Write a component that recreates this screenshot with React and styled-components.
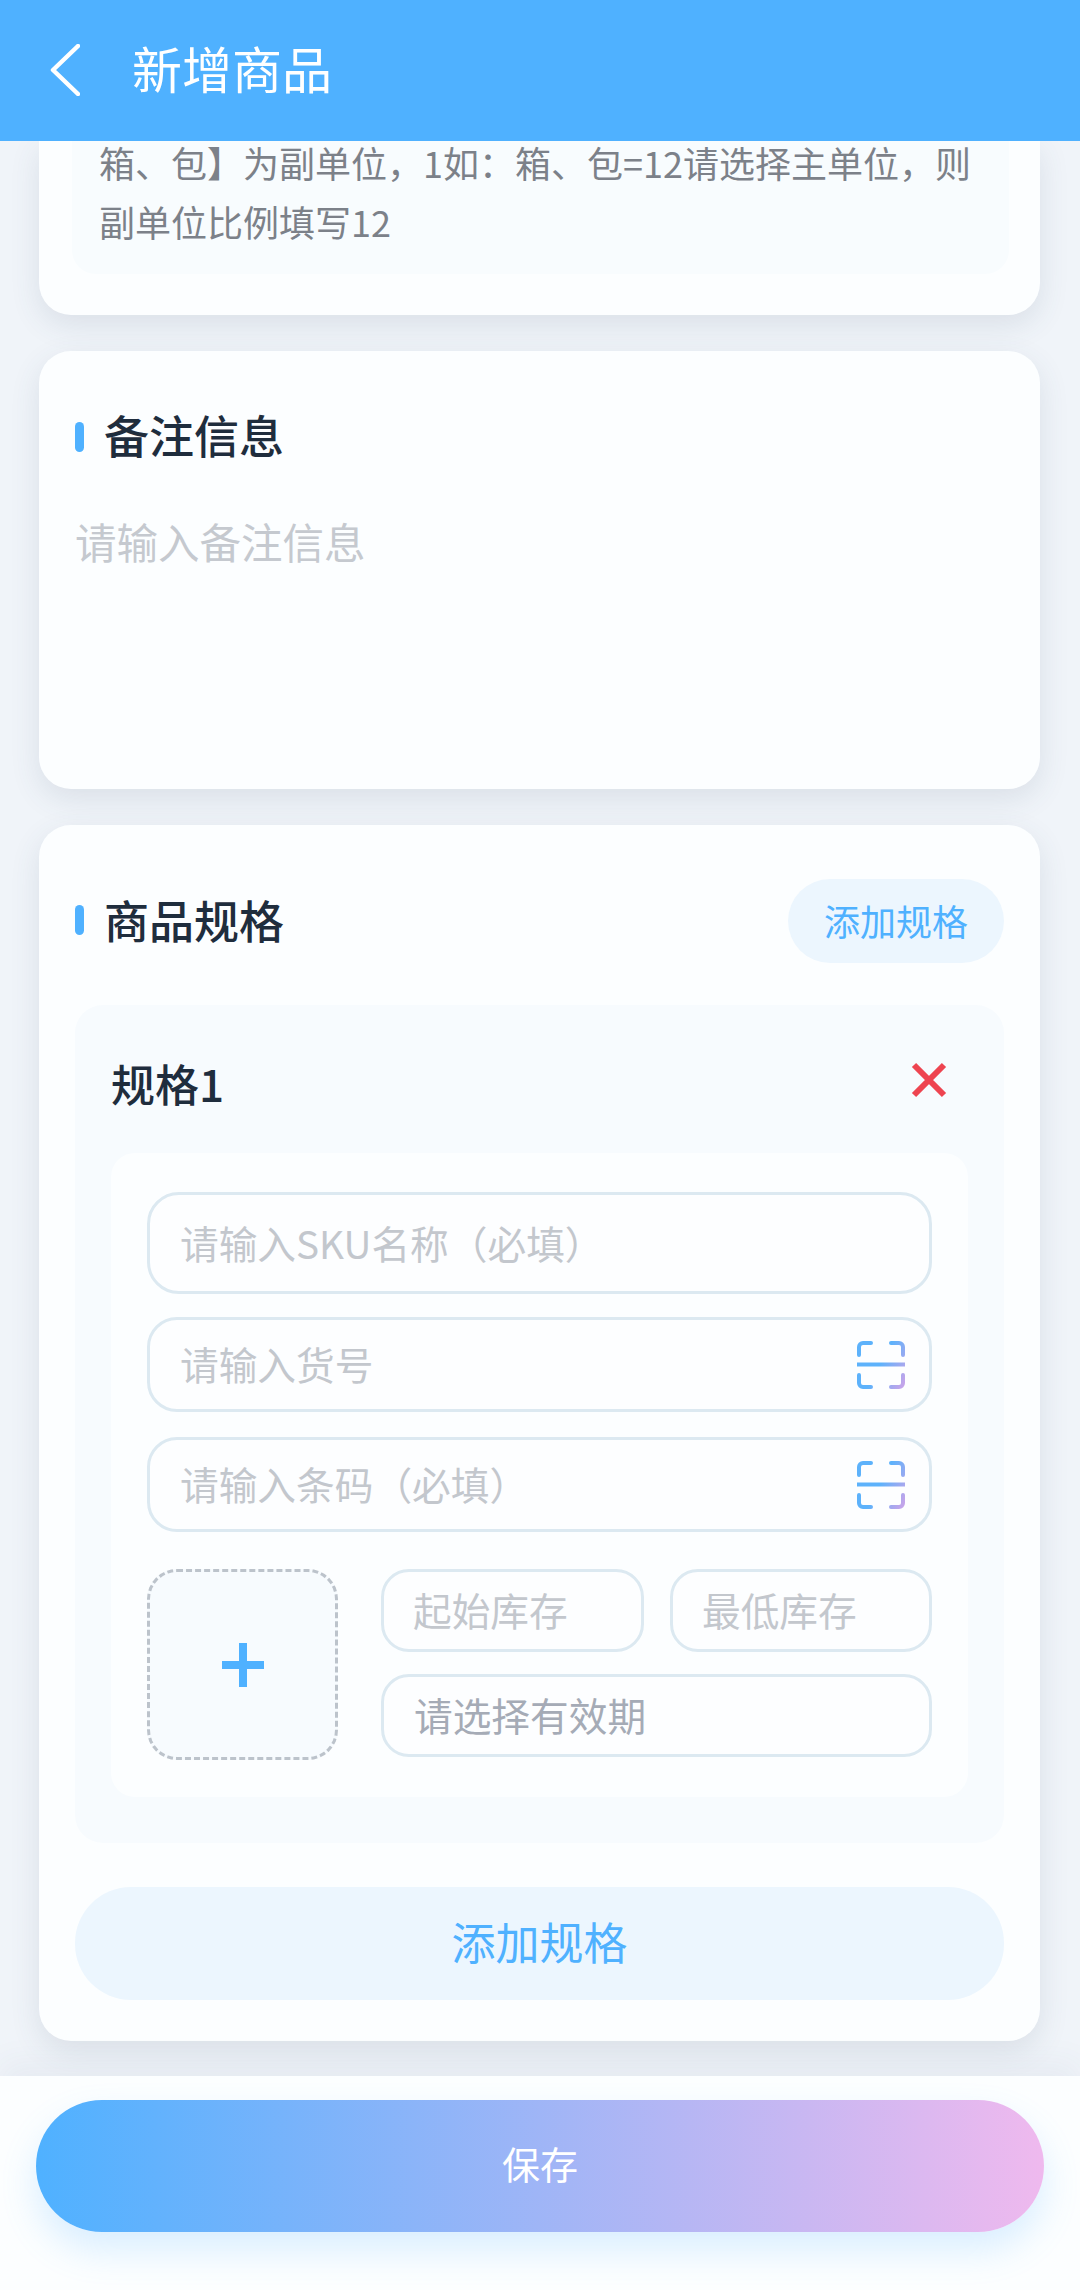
import React from 'react'
import styled, { createGlobalStyle } from 'styled-components'

const Global = createGlobalStyle`
  html, body {
    margin: 0;
    padding: 0;
    background: #f0f4f9;
  }
  * {
    box-sizing: border-box;
  }
`

const Page = styled.div`
  width: 1080px;
  height: 2290px;
  display: flex;
  flex-direction: column;
  overflow: hidden;
  background: #f0f4f9;
  font-family: "Noto Sans CJK SC", "Noto Sans", sans-serif;
`

const Header = styled.div`
  height: 141px;
  flex: none;
  display: flex;
  align-items: center;
  gap: 52px;
  padding: 0 0 0 50px;
  background: #4fb1ff;
  color: #fff;
  font-size: 50px;
  position: relative;
  z-index: 2;

  span {
    margin-top: -7px;
  }

  svg {
    margin-top: -2px;
  }
`

const Main = styled.div`
  flex: 1;
  overflow: hidden;
  display: flex;
  flex-direction: column;
  gap: 36px;
  padding: 0 40px 0 39px;
`

const Card = styled.div`
  flex: none;
  background: #fcfeff;
  border-radius: ${({ $clipped }) => ($clipped ? '0 0 32px 32px' : '32px')};
  padding: ${({ $clipped }) => ($clipped ? '0 31px 41px 33px' : '0 36px')};
  height: ${({ $height }) => $height}px;
  box-shadow: 0 10px 30px rgba(60, 80, 110, 0.12);
`

const Note = styled.div`
  margin-top: -8px;
  padding: 0 27px 0 27px;
  height: 141px;
  border-radius: 0 0 24px 24px;
  background: #f8fcfe;
  color: #7c8189;
  font-size: 36px;
  line-height: 59px;
`

const SectionHead = styled.div`
  height: ${({ $height }) => $height}px;
  margin-top: ${({ $top }) => $top || 0}px;
  display: flex;
  align-items: center;
  justify-content: space-between;
`

const SectionTitle = styled.div`
  display: flex;
  align-items: center;
  gap: 20px;
  color: #1f2d3d;
  font-size: 45px;
  font-weight: 500;
  line-height: 60px;
  margin-top: ${({ $lift }) => ($lift ? '-3px' : '0')};

  &::before {
    content: '';
    width: 9px;
    height: 30px;
    border-radius: 5px;
    background: #4fb1ff;
    margin-top: ${({ $lift }) => ($lift ? '0' : '3px')};
  }
`

const Remark = styled.div`
  margin-top: -8px;
  color: #c5c9cf;
  font-size: 41.5px;
  line-height: 60px;
`

const Chip = styled.div`
  width: 216px;
  height: 84px;
  padding-bottom: 2px;
  border-radius: 42px;
  display: flex;
  align-items: center;
  justify-content: center;
  background: #ecf6fe;
  color: #4fb1ff;
  font-size: 36px;
`

const SpecBlock = styled.div`
  margin-top: 42px;
  height: 838px;
  padding: 0 36px 46px;
  border-radius: 28px;
  background: #f7fbfe;
`

const SpecHead = styled.div`
  height: 148px;
  padding: 0 20px 0 0;
  display: flex;
  align-items: center;
  justify-content: space-between;
  color: #1f2d3d;
  font-size: 44px;
  font-weight: 500;

  span {
    margin-top: 8px;
  }

  svg {
    margin-top: 1px;
    margin-right: 1px;
  }
`

const FormPanel = styled.div`
  height: 644px;
  padding: 39px 36px 37px;
  border-radius: 24px;
  background: #fcfeff;
  display: flex;
  flex-direction: column;
`

const Field = styled.div`
  height: ${({ $height }) => $height || 95}px;
  margin-bottom: ${({ $gap }) => $gap || 0}px;
  padding: 0 25px 3px ${({ $inset }) => $inset || 30}px;
  display: flex;
  align-items: center;
  justify-content: space-between;
  border: 3px solid #dce9f1;
  border-radius: ${({ $radius }) => $radius || 30}px;
  background: #fdfeff;
  color: ${({ $strong }) => ($strong ? '#a5abb6' : '#c3c7cd')};
  font-size: 38.7px;

  svg {
    margin-bottom: -3px;
    margin-right: -1px;
  }
`

const BottomRow = styled.div`
  margin-top: 37px;
  display: flex;
  gap: 43px;
`

const Upload = styled.div`
  width: 191px;
  height: 191px;
  flex: none;
  display: flex;
  align-items: center;
  justify-content: center;
  border: 3px dashed #bcc3cb;
  border-radius: 30px;
  background: #f7fbfe;
`

const StockGrid = styled.div`
  flex: 1;
  height: 188px;
  display: grid;
  grid-template-columns: 263px 262px;
  grid-template-rows: 83px 83px;
  column-gap: 26px;
  row-gap: 22px;
`

const WideField = styled(Field)`
  grid-column: 1 / 3;
`

const AddButton = styled.div`
  margin-top: 44px;
  height: 113px;
  padding-bottom: 5px;
  border-radius: 56px;
  display: flex;
  align-items: center;
  justify-content: center;
  background: #ecf6fe;
  color: #4fb1ff;
  font-size: 44px;
`

const Footer = styled.div`
  height: 214px;
  flex: none;
  padding: 24px 36px 0;
  background: #fcfeff;
  box-shadow: 0 -14px 30px rgba(60, 80, 110, 0.05);
  position: relative;
  z-index: 1;
`

const SaveButton = styled.div`
  height: 132px;
  padding-bottom: 7px;
  border-radius: 66px;
  display: flex;
  align-items: center;
  justify-content: center;
  background: linear-gradient(90deg, #4fb1ff 0%, #efb9ee 100%);
  box-shadow: 0 18px 36px rgba(79, 177, 255, 0.2);
  color: #fff;
  font-size: 38px;
`

const BackIcon = () => (
  <svg width="30" height="52" viewBox="0 0 30 52" fill="none">
    <path d="M28 2 L3 26 L28 50" stroke="#fff" strokeWidth="4.5" strokeLinecap="round" strokeLinejoin="round" />
  </svg>
)

const CloseIcon = () => (
  <svg width="36" height="36" viewBox="0 0 36 36" fill="none">
    <path d="M3 3 L33 33 M33 3 L3 33" stroke="#ee4450" strokeWidth="6" strokeLinecap="butt" />
  </svg>
)

const ScanIcon = ({ id }) => (
  <svg width="48" height="48" viewBox="0 0 48 48" fill="none">
    <defs>
      <linearGradient id={id} x1="0" y1="14" x2="48" y2="40" gradientUnits="userSpaceOnUse">
        <stop offset="0.45" stopColor="#5db2fb" />
        <stop offset="1" stopColor="#c3a4ea" />
      </linearGradient>
    </defs>
    <path
      d="M2 14 V6 a4 4 0 0 1 4-4 H14 M34 2 H42 a4 4 0 0 1 4 4 V14 M2 34 V42 a4 4 0 0 0 4 4 H14 M34 46 H42 a4 4 0 0 0 4-4 V34"
      stroke={`url(#${id})`}
      strokeWidth="4"
      strokeLinecap="round"
    />
    <path d="M0 23.5 H48" stroke={`url(#${id})`} strokeWidth="4" />
  </svg>
)

const PlusIcon = () => (
  <svg width="42" height="44" viewBox="0 0 42 44" fill="#4fb1ff">
    <rect x="17" y="0" width="8" height="44" />
    <rect x="0" y="18" width="42" height="8" />
  </svg>
)

export default function App() {
  return (
    <Page>
      <Global />
      <Header>
        <BackIcon />
        <span>新增商品</span>
      </Header>
      <Main>
        <Card $clipped $height={174}>
          <Note>箱、包】为副单位，1如：箱、包=12请选择主单位，则副单位比例填写12</Note>
        </Card>
        <Card $height={438}>
          <SectionHead $height={168}>
            <SectionTitle>备注信息</SectionTitle>
          </SectionHead>
          <Remark>请输入备注信息</Remark>
        </Card>
        <Card $height={1216}>
          <SectionHead $height={84} $top={54}>
            <SectionTitle $lift>商品规格</SectionTitle>
            <Chip>添加规格</Chip>
          </SectionHead>
          <SpecBlock>
            <SpecHead>
              <span>规格1</span>
              <CloseIcon />
            </SpecHead>
            <FormPanel>
              <Field $height={102} $gap={23} $radius={32}>请输入SKU名称（必填）</Field>
              <Field $gap={25}>
                请输入货号
                <ScanIcon id="scan-a" />
              </Field>
              <Field>
                请输入条码（必填）
                <ScanIcon id="scan-b" />
              </Field>
              <BottomRow>
                <Upload>
                  <PlusIcon />
                </Upload>
                <StockGrid>
                  <Field $height={83} $inset={29} $radius={28}>起始库存</Field>
                  <Field $height={83} $inset={29} $radius={28}>最低库存</Field>
                  <WideField $height={83} $inset={30} $radius={28} $strong>请选择有效期</WideField>
                </StockGrid>
              </BottomRow>
            </FormPanel>
          </SpecBlock>
          <AddButton>添加规格</AddButton>
        </Card>
      </Main>
      <Footer>
        <SaveButton>保存</SaveButton>
      </Footer>
    </Page>
  )
}
